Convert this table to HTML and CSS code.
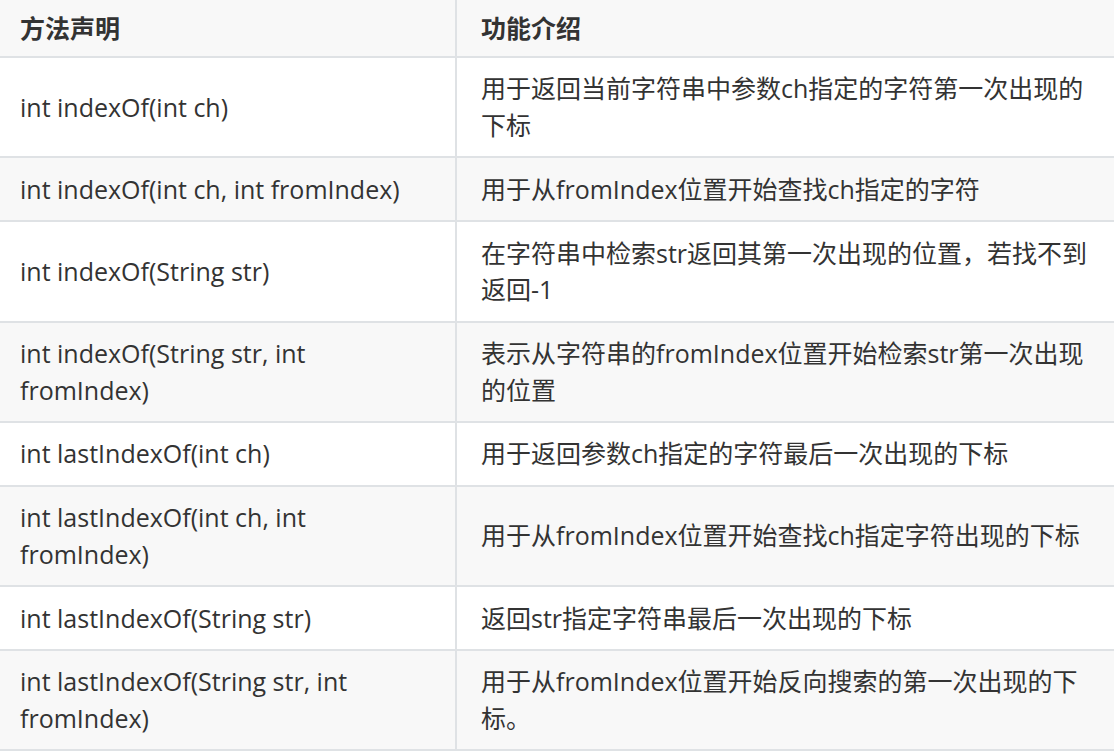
FILE: index.html
```html
<!DOCTYPE html>
<html lang="zh-CN">
<head>
<meta charset="utf-8">
<title>String indexOf</title>
<link rel="stylesheet" href="styles.css">
</head>
<body>
<table class="api-table">
  <thead>
    <tr><th class="col-method">方法声明</th><th>功能介绍</th></tr>
  </thead>
  <tbody>
    <tr><td>int indexOf(int ch)</td><td>用于返回当前字符串中参数ch指定的字符第一次出现的下标</td></tr>
    <tr><td>int indexOf(int ch, int fromIndex)</td><td>用于从fromIndex位置开始查找ch指定的字符</td></tr>
    <tr><td>int indexOf(String str)</td><td>在字符串中检索str返回其第一次出现的位置，若找不到返回-1</td></tr>
    <tr><td>int indexOf(String str, int fromIndex)</td><td>表示从字符串的fromIndex位置开始检索str第一次出现的位置</td></tr>
    <tr><td>int lastIndexOf(int ch)</td><td>用于返回参数ch指定的字符最后一次出现的下标</td></tr>
    <tr><td>int lastIndexOf(int ch, int fromIndex)</td><td>用于从fromIndex位置开始查找ch指定字符出现的下标</td></tr>
    <tr><td>int lastIndexOf(String str)</td><td>返回str指定字符串最后一次出现的下标</td></tr>
    <tr><td>int lastIndexOf(String str, int fromIndex)</td><td>用于从fromIndex位置开始反向搜索的第一次出现的下标。</td></tr>
  </tbody>
</table>
</body>
</html>
```

FILE: styles.css
```css
html, body {
  margin: 0;
  padding: 0;
  background: #ffffff;
}

body {
  font-family: "Open Sans", "Noto Sans CJK SC", sans-serif;
  font-size: 25px;
  line-height: 36.7px;
  color: #333333;
  overflow: hidden;
}

.api-table {
  border-collapse: separate;
  border-spacing: 0;
  table-layout: fixed;
  width: 1126px;
  margin-left: -6px;
}

.api-table th,
.api-table td {
  box-sizing: border-box;
  text-align: left;
  vertical-align: middle;
  padding: 12.5px 24px;
  border-left: 2px solid #dfe2e5;
  border-bottom: 2px solid #dfe2e5;
}

.api-table th:last-child,
.api-table td:last-child {
  border-right: 2px solid #dfe2e5;
}

.api-table th {
  font-weight: 700;
  padding-top: 9.6px;
  padding-bottom: 9.7px;
  background: #f8f8f8;
}

.api-table .col-method {
  width: 461px;
}

.api-table tbody tr:nth-child(2n) {
  background: #f8f8f8;
}
```
